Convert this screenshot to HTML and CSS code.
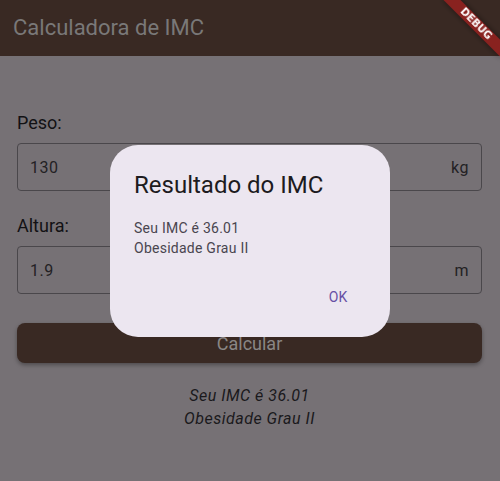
FILE: index.html
```html
<!DOCTYPE html>
<html lang="pt">
<head>
<meta charset="utf-8">
<title>Calculadora de IMC</title>
<link rel="stylesheet" href="styles.css">
</head>
<body>
<header class="appbar">
  <h1 class="appbar-title">Calculadora de IMC</h1>
</header>
<main class="content">
  <div class="label">Peso:</div>
  <div class="field"><span class="field-value">130</span><span class="field-suffix">kg</span></div>
  <div class="label label-second">Altura:</div>
  <div class="field"><span class="field-value">1.9</span><span class="field-suffix">m</span></div>
  <button class="calc-btn" type="button">Calcular</button>
  <p class="result">Seu IMC é 36.01<br>Obesidade Grau II</p>
</main>
<div class="scrim">
  <div class="dialog" role="dialog">
    <h2 class="dialog-title">Resultado do IMC</h2>
    <div class="dialog-content">Seu IMC é 36.01<br>Obesidade Grau II</div>
    <div class="dialog-actions"><button class="ok-btn" type="button">OK</button></div>
  </div>
</div>
<div class="debug-banner">DEBUG</div>
</body>
</html>
```
FILE: styles.css
```css
html, body {
  margin: 0;
  padding: 0;
  height: 100%;
  overflow: hidden;
}
body {
  background: #767175;
  font-family: Roboto, "Noto Sans", sans-serif;
  position: relative;
}
.appbar {
  height: 56px;
  background: #392923;
  display: flex;
  align-items: center;
  padding-left: 13px;
}
.appbar-title {
  margin: 0;
  font-size: 22px;
  font-weight: 400;
  line-height: 56px;
  color: #797878;
}
.content {
  padding: 55px 18px 0 17px;
  display: flex;
  flex-direction: column;
}
.label {
  font-size: 18px;
  line-height: 24px;
  color: #121114;
  margin-bottom: 8px;
}
.label-second {
  margin-top: 23px;
}
.field {
  height: 48px;
  box-sizing: border-box;
  border: 1px solid #4a474b;
  border-radius: 4px;
  display: flex;
  align-items: center;
  justify-content: space-between;
  padding: 0 12px;
  font-size: 16px;
  letter-spacing: 0.5px;
  color: #232124;
}
.calc-btn {
  margin-top: 29px;
  height: 40px;
  border: 0;
  border-radius: 8px;
  background: #392923;
  color: #8a8685;
  font-family: Roboto, sans-serif;
  font-size: 18px;
  box-shadow: 0 2px 4px rgba(0, 0, 0, 0.35);
  padding: 0;
}
.result {
  margin: 21px 0 0;
  text-align: center;
  font-style: italic;
  font-size: 16px;
  line-height: 23px;
  letter-spacing: 0.5px;
  color: #1a191c;
}
.scrim {
  position: fixed;
  inset: 0;
  display: flex;
  align-items: center;
  justify-content: center;
}
.dialog {
  width: 280px;
  box-sizing: border-box;
  padding: 24px;
  background: #ece6f0;
  border-radius: 28px;
}
.dialog-title {
  margin: 0 0 17px;
  font-size: 24px;
  font-weight: 400;
  line-height: 32px;
  color: #1d1b20;
}
.dialog-content {
  font-size: 14px;
  line-height: 20px;
  letter-spacing: 0.25px;
  color: #49454f;
}
.dialog-actions {
  padding-top: 23px;
  display: flex;
  justify-content: flex-end;
}
.ok-btn {
  min-width: 56px;
  height: 32px;
  padding: 0 12px;
  border: 0;
  background: transparent;
  color: #6750a4;
  font-family: Roboto, sans-serif;
  font-size: 14px;
  font-weight: 400;
  letter-spacing: 0.1px;
}
.debug-banner {
  position: absolute;
  left: 436px;
  top: 18px;
  width: 80px;
  height: 12px;
  transform: rotate(45deg);
  background: rgba(183, 28, 28, 0.63);
  box-shadow: 0 0 6px rgba(0, 0, 0, 0.5);
  color: #ffffff;
  font-family: "DejaVu Sans", sans-serif;
  font-size: 10.2px;
  font-weight: 900;
  line-height: 12px;
  text-align: center;
}
```
